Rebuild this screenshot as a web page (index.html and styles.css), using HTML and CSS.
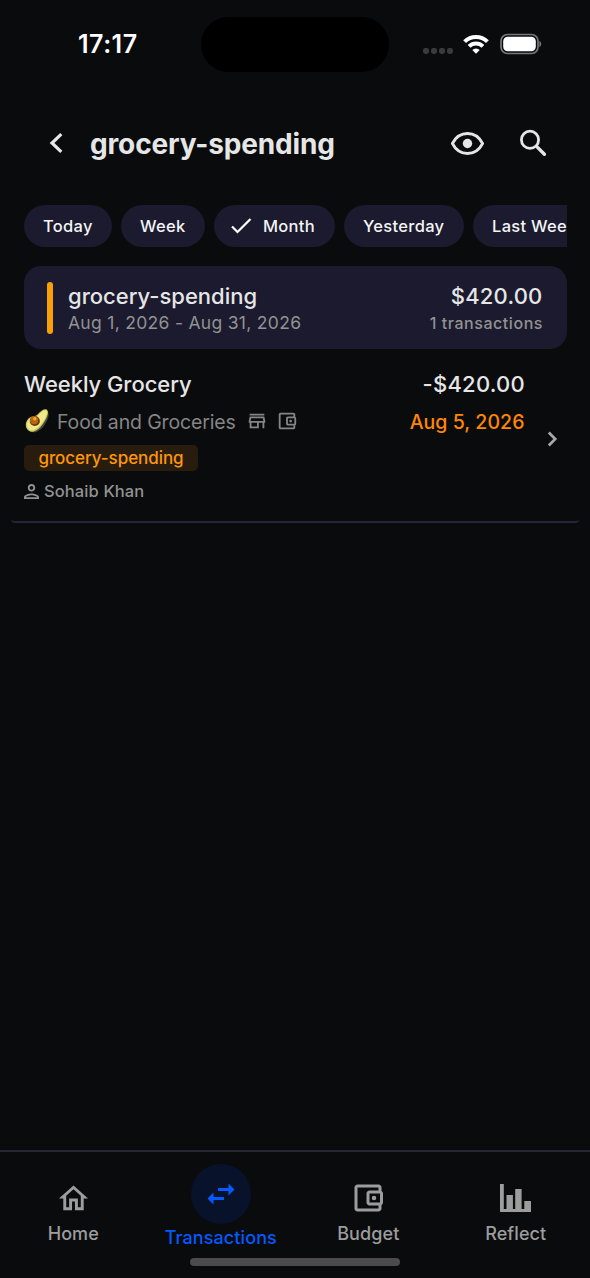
FILE: index.html
```html
<!DOCTYPE html>
<html lang="en">
<head>
<meta charset="utf-8">
<title>grocery-spending</title>
<link rel="stylesheet" href="styles.css">
</head>
<body>
<div class="screen">
  <div class="status">
    <div class="time"><span class="t-time">17:17</span></div>
    <div class="island"></div>
    <div class="indicators">
      <svg class="cell" viewBox="0 0 30 6" width="30" height="6"><rect x="0" width="6" height="6" rx="2.4"/><rect x="8" width="6" height="6" rx="2.4"/><rect x="16" width="6" height="6" rx="2.4"/><rect x="24" width="6" height="6" rx="2.4"/></svg>
      <svg class="wifi" viewBox="0 0 26 20" width="26" height="20"><g fill="none" stroke="#fff" stroke-width="4"><path d="M1.6 7.6a16.2 16.2 0 0 1 22.8 0"/><path d="M6.1 12.3a9.8 9.8 0 0 1 13.8 0"/></g><path d="M13 19.8l-3.7-3.7a5.2 5.2 0 0 1 7.4 0z" fill="#fff"/></svg>
      <svg class="battery" viewBox="0 0 42 22" width="42" height="22"><rect x="1" y="1.5" width="37" height="19" rx="6.5" fill="none" stroke="#77777a" stroke-width="1.7"/><rect x="3.2" y="3.7" width="32.6" height="14.6" rx="4.5" fill="#fff"/><path d="M39.4 8v6c2.4-1 2.4-5 0-6z" fill="#77777a"/></svg>
    </div>
  </div>

  <header class="header">
    <svg class="back" viewBox="0 0 16 24" width="16" height="24"><path d="M14.3 3.2L5 12l9.300 8.800" fill="none" stroke="#e6e6e6" stroke-width="3.2"/></svg>
    <h1 class="title"><span class="t-title">grocery-spending</span></h1>
    <svg class="eye" viewBox="0 0 34 24" width="34" height="24"><path d="M2.400 12.500C5.700 6.100 11.100 2.500 17.500 2.500s11.800 3.600 15.100 10C29.300 18.900 23.900 22.500 17.500 22.500S5.700 18.900 2.400 12.500z" fill="none" stroke="#e6e6e6" stroke-width="2.800" stroke-linejoin="round"/><circle cx="17.500" cy="12.500" r="4.700" fill="#e6e6e6"/></svg>
    <svg class="search" viewBox="0 0 28 28" width="28" height="28"><circle cx="11" cy="10.800" r="8.600" fill="none" stroke="#e6e6e6" stroke-width="2.800"/><path d="M17.800 17.600L25.400 25.200" stroke="#e6e6e6" stroke-width="3.400" stroke-linecap="round"/></svg>
  </header>

  <div class="chips">
    <div class="chip chip-today"><span class="t-chip">Today</span></div>
    <div class="chip chip-week"><span class="t-chip">Week</span></div>
    <div class="chip chip-month">
      <svg viewBox="0 0 22 18" width="22" height="18"><path d="M1 9.500l5.500 5.500L19.500 2" fill="none" stroke="#fff" stroke-width="2.200"/></svg>
      <span class="t-chip">Month</span>
    </div>
    <div class="chip chip-yesterday"><span class="t-chip">Yesterday</span></div>
    <div class="chip chip-last"><span class="t-chip">Last Week</span></div>
  </div>

  <section class="card">
    <div class="accent"></div>
    <div class="card-left">
      <div class="card-name"><span class="t-name">grocery-spending</span></div>
      <div class="card-sub"><span class="t-range">Aug 1, 2026 - Aug 31, 2026</span></div>
    </div>
    <div class="card-right">
      <div class="card-name"><span class="t-total">$420.00</span></div>
      <div class="card-sub"><span class="t-count">1 transactions</span></div>
    </div>
  </section>

  <section class="entry">
    <div class="entry-left">
      <div class="entry-name"><span class="t-entry">Weekly Grocery</span></div>
      <div class="category">
        <svg class="avocado" viewBox="0 0 24 26" width="24" height="26">
          <path d="M22.800 3.500c2.300 3.800-.8 9.800-3.300 13.500C16.400 22 10 26.500 4.600 23.200L15 5z" fill="#45473d"/>
          <path d="M12.800 6.300C16 2.500 19.500.2 22 1.700c2.600 2.200-.2 8.600-3.500 13.200C14.500 21 8.500 25.800 3.700 22.800-1.300 19 .7 11.500 5.300 9.200c3-1.200 5.200-.5 7.500-2.900z" fill="#c9c75c"/>
          <path d="M13.600 7C16.500 3.500 19.400 1.500 21.300 2.500c1.900 1.600-.3 7-3.700 11.800-4 5.600-9.400 10-13.300 7.500C.2 18.600 2 12 6 10c2.700-1.200 5.200-.4 7.600-3z" fill="#eeea8b"/>
          <circle cx="9.800" cy="13" r="5.100" fill="#703507"/><circle cx="9.200" cy="12.200" r="4" fill="#b96812"/><circle cx="9.800" cy="10.800" r="1.700" fill="#edaa43"/>
        </svg>
        <span class="t-category">Food and Groceries</span>
        <svg class="store" viewBox="0 0 24 24" width="22" height="22"><path d="M18.360 9l.6 3H5.040l.6-3h12.720M20 4H4v2h16V4zm0 3H4l-1 5v2h1v6h10v-6h4v6h2v-6h1v-2l-1-5zM6 18v-4h6v4H6z"/></svg>
        <svg class="wallet" viewBox="0 0 24 24" width="22" height="22"><path d="M21 7.280V5c0-1.100-.9-2-2-2H5c-1.110 0-2 .9-2 2v14c0 1.100.89 2 2 2h14c1.100 0 2-.9 2-2v-2.280c.59-.35 1-.98 1-1.720V9c0-.74-.41-1.370-1-1.720zM20 9v6h-7V9h7zM5 19V5h14v2h-6c-1.100 0-2 .9-2 2v6c0 1.100.9 2 2 2h6v2H5z"/><circle cx="16" cy="12" r="1.500"/></svg>
      </div>
      <div class="tag"><span class="t-tag">grocery-spending</span></div>
      <div class="person">
        <svg viewBox="4 4 16 16" width="15" height="15"><path d="M12 6a2 2 0 1 1 0 4 2 2 0 0 1 0-4m0 10c2.700 0 5.800 1.290 6 2H6c.23-.72 3.310-2 6-2m0-12C9.790 4 8 5.790 8 8s1.790 4 4 4 4-1.790 4-4-1.790-4-4-4zm0 10c-2.670 0-8 1.340-8 4v2h16v-2c0-2.660-5.330-4-8-4z"/></svg>
        <span class="t-person">Sohaib Khan</span>
      </div>
    </div>
    <div class="entry-right">
      <div class="entry-name"><span class="t-amount">-$420.00</span></div>
      <div class="entry-date"><span class="t-date">Aug 5, 2026</span></div>
    </div>
    <svg class="chevron" viewBox="0 0 12 18" width="12" height="18"><path d="M2.800 2.500L9.200 9l-6.400 6.500" fill="none" stroke="#a8a8a8" stroke-width="2.700"/></svg>
  </section>

  <nav class="nav">
    <div class="tab">
      <div class="tab-icon"><svg viewBox="0 0 24 24" width="35" height="35"><path d="M12 5.690l5 4.500V18h-2v-6H9v6H7v-7.810l5-4.500M12 3L2 12h3v8h6v-6h2v6h6v-8h3L12 3z"/></svg></div>
      <span class="t-tab">Home</span>
    </div>
    <div class="tab active">
      <div class="tab-icon"><svg viewBox="0 0 24 24" width="36" height="36"><path d="M6.990 11L3 15l3.990 4v-3H14v-2H6.990v-3zM21 9l-3.990-4v3H10v2h7.010v3L21 9z"/></svg></div>
      <span class="t-tab">Transactions</span>
    </div>
    <div class="tab">
      <div class="tab-icon"><svg viewBox="0 0 24 24" width="36" height="36"><path d="M21 7.280V5c0-1.100-.9-2-2-2H5c-1.110 0-2 .9-2 2v14c0 1.100.89 2 2 2h14c1.100 0 2-.9 2-2v-2.280c.59-.35 1-.98 1-1.720V9c0-.74-.41-1.370-1-1.720zM20 9v6h-7V9h7zM5 19V5h14v2h-6c-1.100 0-2 .9-2 2v6c0 1.100.9 2 2 2h6v2H5z"/><circle cx="16" cy="12" r="1.500"/></svg></div>
      <span class="t-tab">Budget</span>
    </div>
    <div class="tab">
      <div class="tab-icon"><svg viewBox="0 0 31 28" width="31" height="28"><path d="M0 0h3.800v25h2.700V11h6.400v14h2.300V5h6.400v20h2.700v-8H31v11H0z"/></svg></div>
      <span class="t-tab">Reflect</span>
    </div>
    <div class="home-bar"></div>
  </nav>
</div>
</body>
</html>
```
FILE: styles.css
```css
* { box-sizing: border-box; }
body { margin: 0; background: #0a0b0d; font-family: Inter, "Liberation Sans", sans-serif; color: #e6e6e6; }
.screen { width: 590px; height: 1278px; display: flex; flex-direction: column; overflow: hidden; }
svg { display: block; flex: none; }
span { white-space: nowrap; }

.status { height: 100px; display: flex; padding: 17px 0 0 78px; }
.time { width: 123px; height: 55px; line-height: 55px; }
.island { width: 188px; height: 55px; border-radius: 28px; background: #000; }
.indicators { display: flex; height: 53px; align-items: center; padding-left: 34px; }
.cell { fill: #3b3b3e; margin-top: 14px; }
.wifi { margin-left: 10px; }
.battery { margin-left: 10.500px; }

.header { height: 86px; display: flex; align-items: center; padding-left: 47px; }
.title { margin: 0 0 0 27px; width: 360px; font-weight: 700; line-height: 36px; padding-top: 1px; }
.search { margin-left: 35px; }

.chips { margin: 19px 23px 0 24px; height: 42px; display: flex; gap: 9px; overflow: hidden; flex: none; }
.chip { height: 42px; border-radius: 21px; background: #1b1a2e; flex: none; display: flex; align-items: center; padding-left: 19px; }
.chip-today { width: 88px; }
.chip-week { width: 84px; }
.chip-month { width: 121px; padding-left: 17px; gap: 10px; }
.chip-yesterday { width: 120px; }
.chip-last { width: 130px; }

.card { margin: 19px 23px 0 24px; height: 83px; flex: none; border-radius: 17px; background: #1b1a2e; display: flex; padding: 16px 24.500px 0 23px; }
.accent { width: 6px; height: 52px; border-radius: 3px; background: #f99f08; }
.card-left { margin-left: 15px; flex: 1; }
.card-right { text-align: right; }
.card-name { height: 28px; line-height: 28px; }
.card-sub { height: 26px; line-height: 26px; color: #929292; }

.entry { margin: 0 11px; height: 174px; border-bottom: 2px solid #252538; flex: none; border-radius: 4px; display: flex; padding: 19px 21px 0 13px; }
.entry-left { flex: 1; }
.entry-right { text-align: right; padding-right: 21px; }
.entry-name { height: 32px; line-height: 32px; }
.category { height: 43px; display: flex; align-items: center; color: #858585; }
.category .t-category { margin-left: 8px; }
.avocado { margin-left: 1px; margin-top: -1px; }
.store { margin-left: 10px; margin-top: -1px; fill: #858585; }
.wallet { margin-left: 8px; margin-top: -1px; fill: #858585; }
.tag { margin-top: 2px; width: 174px; height: 26px; line-height: 26px; border-radius: 5px; background: #281c0e; color: #fe9708; text-align: center; }
.person { display: flex; align-items: center; gap: 5px; height: 40px; color: #929292; }
.person svg { fill: #929292; }
.entry-date { height: 44px; line-height: 44px; color: #ff8605; }
.chevron { margin-top: 62px; }

.nav { margin-top: auto; height: 128px; border-top: 2px solid #262637; display: grid; grid-template-columns: repeat(4, 147.500px); position: relative; flex: none; color: #9d9d9d; }
.tab { display: flex; flex-direction: column; align-items: center; padding: 28px 1px 0 0; }
.tab-icon { height: 36px; display: flex; align-items: center; justify-content: center; fill: #9d9d9d; }
.tab span { line-height: 24px; margin-top: 6px; }
.active { color: #0459ff; padding-top: 11.500px; }
.active .tab-icon { width: 60px; height: 60px; border-radius: 50%; background: #08122b; fill: #0459ff; }
.active span { margin-top: 2.500px; }
.home-bar { position: absolute; left: 190px; bottom: 12px; width: 210px; height: 8px; border-radius: 4px; background: #4b4b4d; }

.t-time { font-size: 25px; font-weight: 600; letter-spacing: 0.500px; color: #fff; }
.t-title { font-size: 28px; font-weight: 700; letter-spacing: -0.150px; }
.t-chip { font-size: 16.500px; font-weight: 500; letter-spacing: 0.300px; color: #f4f4f4; }
.t-name { font-size: 22px; font-weight: 500; }
.t-total { font-size: 22px; font-weight: 500; letter-spacing: 0.200px; }
.t-range { font-size: 17.500px; letter-spacing: 0.300px; }
.t-count { font-size: 16px; font-weight: 500; letter-spacing: 0.550px; margin-right: -0.500px; }
.t-entry { font-size: 22px; font-weight: 500; letter-spacing: -0.050px; }
.t-amount { font-size: 22px; font-weight: 500; letter-spacing: 0.250px; }
.t-category { font-size: 19.500px; letter-spacing: -0.140px; }
.t-tag { font-size: 17px; font-weight: 500; letter-spacing: -0.060px; }
.t-person { font-size: 16.500px; font-weight: 500; letter-spacing: 0.100px; }
.t-date { font-size: 19.500px; font-weight: 500; letter-spacing: 0.060px; margin-right: 0.500px; }
.t-tab { font-size: 18px; font-weight: 500; letter-spacing: 0.100px; }
```
